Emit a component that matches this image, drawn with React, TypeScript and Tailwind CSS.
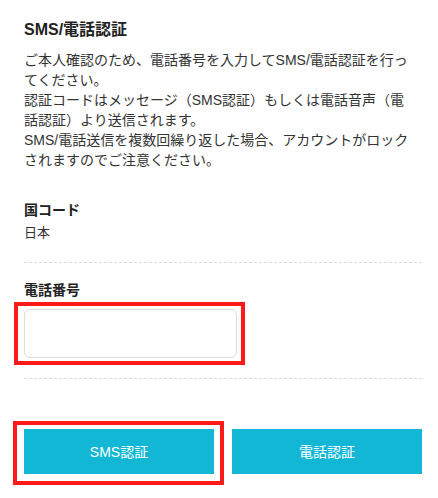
import React from "react";

const font = "font-['Liberation_Sans','Noto_Sans_CJK_JP',sans-serif]";

const Annotated = ({ children, box }: { children: React.ReactNode; box: string }) => (
  <div className="relative">
    {children}
    <span className={`pointer-events-none absolute border-4 border-[#ff1a1a] ${box}`} />
  </div>
);

const App = () => {
  return (
    <div className={`min-h-[498px] w-[438px] bg-white pl-6 pr-4 pt-[18px] ${font}`}>
      <h1 className="text-base font-bold leading-6 text-[#222]">SMS/電話認証</h1>

      <p className="mt-2 w-[390px] text-sm leading-5 text-[#333]">
        ご本人確認のため、電話番号を入力してSMS/電話認証を行ってください。
        <br />
        認証コードはメッセージ（SMS認証）もしくは電話音声（電話認証）より送信されます。
        <br />
        SMS/電話送信を複数回繰り返した場合、アカウントがロックされますのでご注意ください。
      </p>

      <div className="mt-[30px] border-b border-dashed border-[#dcdcdc] pb-[19px]">
        <h2 className="text-sm font-bold leading-5 text-[#222]">国コード</h2>
        <p className="mt-[3px] text-[13px] leading-5 text-[#333]">日本</p>
      </div>

      <div className="mt-[17px] border-b border-dashed border-[#dcdcdc] pb-5">
        <h2 className="text-sm font-bold leading-5 text-[#222]">電話番号</h2>
        <div className="mt-[9px] w-[213px]">
          <Annotated box="-top-[7px] -left-[10px] -right-[8px] -bottom-[7px]">
            <input
              type="tel"
              className="block h-[49px] w-[213px] rounded-md border border-[#dddddd] bg-white px-3 text-sm outline-none"
            />
          </Annotated>
        </div>
      </div>

      <div className="mt-[50px] flex gap-[18px]">
        <Annotated box="-top-2 -left-[11px] -right-[10px] -bottom-[11px]">
          <button className="flex h-[45px] w-[190px] items-center justify-center bg-[#12b7d5] text-sm text-white">
            SMS認証
          </button>
        </Annotated>
        <button className="flex h-[45px] w-[190px] items-center justify-center bg-[#12b7d5] text-sm text-white">
          電話認証
        </button>
      </div>
    </div>
  );
};

export default App;
